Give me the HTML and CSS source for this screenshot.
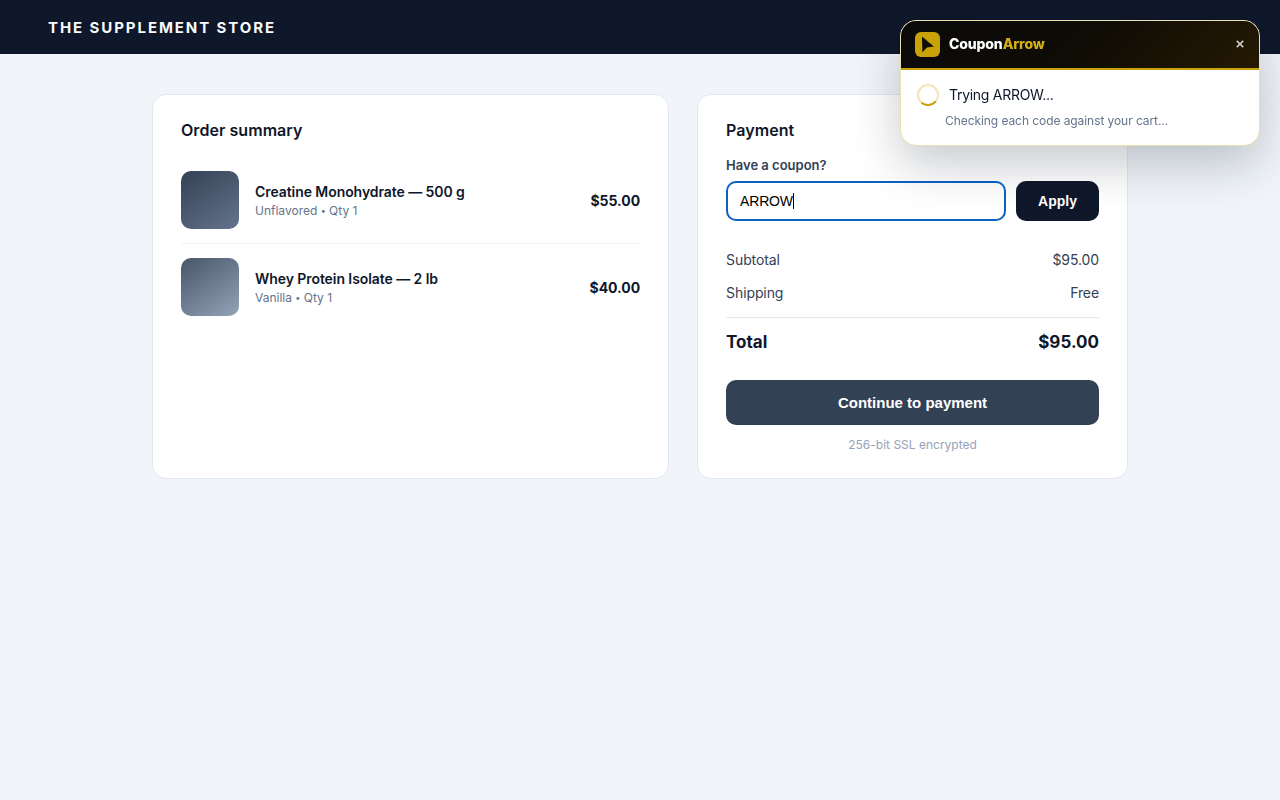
FILE: index.html
```html
<!DOCTYPE html>
<html lang="en">

<head>
    <meta charset="UTF-8">
    <meta name="viewport" content="width=device-width, initial-scale=1.0">
    <title>The Supplement Store - Checkout</title>
    <link rel="stylesheet" href="styles.css">
</head>

<body>
    <header class="store-header">The Supplement Store</header>

    <main class="checkout">
        <section class="card">
            <h2>Order summary</h2>
            <div class="item">
                <div class="thumb"></div>
                <div class="item-info">
                    <div class="item-name">Creatine Monohydrate — 500 g</div>
                    <div class="item-meta">Unflavored <span class="dot">•</span> Qty 1</div>
                </div>
                <div class="item-price">$55.00</div>
            </div>
            <div class="item">
                <div class="thumb thumb-light"></div>
                <div class="item-info">
                    <div class="item-name">Whey Protein Isolate — 2 lb</div>
                    <div class="item-meta">Vanilla <span class="dot">•</span> Qty 1</div>
                </div>
                <div class="item-price">$40.00</div>
            </div>
        </section>

        <section class="card payment">
            <h2>Payment</h2>
            <label class="coupon-label" for="coupon">Have a coupon?</label>
            <div class="coupon-row">
                <div class="coupon-input" id="coupon" role="textbox"><span>ARROW</span><i class="caret"></i></div>
                <button class="apply-btn">Apply</button>
            </div>
            <div class="line"><span>Subtotal</span><span>$95.00</span></div>
            <div class="line"><span>Shipping</span><span>Free</span></div>
            <div class="line total"><span>Total</span><span>$95.00</span></div>
            <button class="pay-btn">Continue to payment</button>
            <p class="secure">256-bit SSL encrypted</p>
        </section>
    </main>

    <aside class="popup">
        <div class="popup-header">
            <svg class="popup-logo" viewBox="0 0 25 25" width="25" height="25">
                <rect width="25" height="25" rx="6" fill="#c9a20a" />
                <path d="M7 4.7L18.9 14.5L11.9 15.4L7.4 20.2Z" fill="#0d0c08" />
                <path d="M8 5.3L12.5 9" stroke="#6b5708" stroke-width="0.8" />
            </svg>
            <span class="popup-brand">Coupon<b>Arrow</b></span>
            <svg class="popup-close" viewBox="0 0 8 8" width="8" height="8">
                <path d="M0.8 0.8L7.2 7.2M7.2 0.8L0.8 7.2" />
            </svg>
        </div>
        <div class="popup-body">
            <div class="status">
                <svg class="spinner" viewBox="0 0 22 22" width="22" height="22">
                    <circle cx="11" cy="11" r="10" stroke="#f1e5b5" />
                    <path d="M4.6 18.7A10 10 0 0 0 18.7 17.4" stroke="#c9a20a" />
                </svg>
                <span>Trying ARROW...</span>
            </div>
            <p class="hint">Checking each code against your cart...</p>
        </div>
    </aside>
</body>

</html>
```
FILE: styles.css
```css
*,
*:before,
*:after {
    box-sizing: border-box;
    margin: 0;
    padding: 0;
}

body {
    min-height: 100vh;
    background: #f1f5f9;
    color: #0f172a;
    font-family: Inter, "Liberation Sans", sans-serif;
    font-size: 14px;
}

.store-header {
    height: 54px;
    padding: 0 48px;
    background: #0f172a;
    color: #f8fafc;
    font-size: 15px;
    font-weight: 700;
    line-height: 56px;
    letter-spacing: 1.92px;
    text-transform: uppercase;
}

.checkout {
    display: grid;
    grid-template-columns: 1.2fr 1fr;
    gap: 28px;
    width: 976px;
    margin: 40px auto 0;
}

.card {
    height: 385px;
    padding: 25px 28px;
    background: #fff;
    border: 1px solid #e2e8f0;
    border-radius: 14px;
}

.card h2 {
    font-size: 16px;
    font-weight: 600;
    line-height: 20px;
    letter-spacing: 0.06px;
}

.item {
    display: flex;
    align-items: center;
    gap: 16px;
    height: 87px;
}

.card h2 + .item {
    margin-top: 16px;
}

.item + .item {
    border-top: 1px solid #f1f5f9;
}

.thumb {
    width: 58px;
    height: 58px;
    border-radius: 10px;
    background: linear-gradient(145deg, #334155, #64748b);
}

.thumb-light {
    background: linear-gradient(145deg, #475569, #94a3b8);
}

.item-info {
    flex: 1;
    padding-top: 2px;
}

.item-name {
    font-size: 14px;
    font-weight: 600;
    line-height: 20px;
    letter-spacing: -0.07px;
}

.item-meta {
    color: #64748b;
    font-size: 12px;
    line-height: 18px;
}

.dot {
    display: inline-block;
    width: 5px;
    font-size: 9px;
    vertical-align: 1px;
    line-height: 1;
}

.item-price {
    padding-top: 1px;
    font-size: 14px;
    font-weight: 700;
    letter-spacing: -0.05px;
}

.coupon-label {
    display: block;
    margin-top: 16px;
    color: #334155;
    font-size: 13px;
    font-weight: 600;
    line-height: 18px;
}

.coupon-row {
    display: flex;
    gap: 10px;
    margin: 7px 0 22px;
}

.coupon-input {
    display: flex;
    flex: 1;
    align-items: center;
    height: 40px;
    padding: 0 12px;
    border: 2px solid #0b62c1;
    border-radius: 10px;
    color: #000;
    font: 14px "Liberation Sans", sans-serif;
    letter-spacing: -0.2px;
}

.caret {
    width: 1px;
    height: 16px;
    background: #000;
}

.apply-btn,
.pay-btn {
    border: 0;
    border-radius: 10px;
    background: #0f172a;
    color: #fff;
    font: bold 14px "Liberation Sans", sans-serif;
}

.apply-btn {
    width: 83px;
}

.line {
    display: flex;
    align-items: center;
    justify-content: space-between;
    height: 33px;
    color: #334155;
    font-size: 14px;
    letter-spacing: -0.1px;
}

.total {
    height: 50px;
    margin-top: 8px;
    padding-bottom: 2px;
    border-top: 1px solid #e2e8f0;
    color: #0f172a;
    font-size: 17px;
    font-weight: 700;
    letter-spacing: 0;
}

.pay-btn {
    width: 100%;
    height: 45px;
    margin-top: 13px;
    background: #334155;
    font-size: 15px;
}

.secure {
    margin-top: 12px;
    color: #94a3b8;
    font-size: 12px;
    line-height: 16px;
    text-align: center;
}

/* Extension popup */
.popup {
    position: fixed;
    top: 20px;
    right: 20px;
    width: 360px;
    height: 126px;
    overflow: hidden;
    background: #fff;
    border: 1px solid #eadfae;
    border-radius: 16px;
    box-shadow: 0 18px 48px rgba(15, 23, 42, 0.24);
}

.popup-header {
    display: flex;
    align-items: center;
    height: 49px;
    padding: 0 15px 2px 14px;
    border-bottom: 2px solid #c9a20a;
    background: linear-gradient(135deg, #0a0a0a 0%, #0f0c05 50%, #241903 100%);
}

.popup-logo {
    margin-top: 2px;
}

.popup-brand {
    flex: 1;
    margin-left: 9px;
    color: #fff;
    font-size: 14px;
    font-weight: 800;
    letter-spacing: -0.14px;
}

.popup-brand b {
    color: #d4af1c;
    font-weight: 800;
}

.popup-close path {
    fill: none;
    stroke: #c9c6bd;
    stroke-width: 1.7;
}

.popup-body {
    padding: 14px 16px;
}

.status {
    display: flex;
    align-items: center;
    gap: 10px;
    height: 22px;
    font-size: 14px;
    line-height: 20px;
    letter-spacing: -0.28px;
}

.spinner circle,
.spinner path {
    fill: none;
    stroke-width: 2;
}

.hint {
    margin: 6px 0 0 28px;
    color: #64748b;
    font-size: 12px;
    line-height: 18px;
    letter-spacing: -0.07px;
}
```
